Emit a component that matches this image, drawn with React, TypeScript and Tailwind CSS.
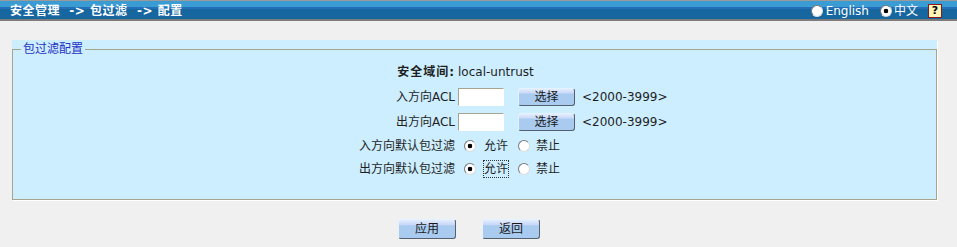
const font = "font-['DejaVu_Sans','Noto_Sans_CJK_SC',sans-serif]"

const Radio = ({ checked }: { checked?: boolean }) => (
    <span
        className={`inline-block h-[12px] w-[12px] rounded-full border border-[#7a7a7a] border-b-[#dcdcdc] border-r-[#dcdcdc] ${
            checked ? "bg-[radial-gradient(circle,#000000_2px,#ffffff_2.6px)]" : "bg-white"
        }`}
    />
)

const Btn = ({ label, w, h }: { label: string; w: string; h: string }) => (
    <button
        className={`${w} ${h} flex items-center justify-center rounded-[3px] border border-[#e6f2ff] border-b-[#55606e] border-r-[#55606e] bg-[linear-gradient(to_bottom,#e2eefd_0%,#cbd8f8_25%,#a9cbf0_32%,#a9cbf0_100%)] text-[12px] text-[#1a1a1a]`}
    >
        {label}
    </button>
)

const Row = ({ label, h, children }: { label: React.ReactNode; h: string; children: React.ReactNode }) => (
    <div className={`flex items-center ${h}`}>
        <div className="w-[442px] text-right">{label}</div>
        <div className="flex items-center pl-[3px]">{children}</div>
    </div>
)

export default function App() {
    return (
        <div className={`min-h-[247px] w-[957px] bg-[#f0f0f0] text-[12px] leading-[16px] text-[#1e1e1e] ${font}`}>
            {/* title bar */}
            <div className="flex h-[21px] items-center justify-between bg-[linear-gradient(to_bottom,#9a9a9a_0px,#9a9a9a_1px,#3b9bd3_1px,#3b9bd3_7px,#2470b8_7px,#2470b8_9px,#16679f_9px,#16679f_19px,#7c7c7c_19px,#7c7c7c_21px)] pl-[10px] pr-[15px]">
                <span className="whitespace-pre font-bold tracking-[0.5px] text-white">安全管理  -&gt; 包过滤  -&gt; 配置</span>
                <div className="flex items-center text-white">
                    <Radio />
                    <span className="ml-[3px]">English</span>
                    <span className="ml-[11px] flex"><Radio checked /></span>
                    <span className="ml-[2px]">中文</span>
                    <span className="ml-[10px] flex h-[14px] w-[14px] items-center justify-center border border-[#8a1a1a] bg-[#fff6b8] text-[11px] font-bold leading-none text-black">?</span>
                </div>
            </div>

            {/* form panel */}
            <div className="ml-[12px] mt-[19px] w-[925px] bg-[#cdeeff] pt-[1px] shadow-[1px_1px_0_#ffffff]">
                <fieldset className="h-[159px] border border-[#a6a48c]">
                    <legend className="ml-[8px] px-[2px] text-[#2631c4]">包过滤配置</legend>
                    <div className="flex flex-col pt-[2px]">
                        <Row h="h-[25px]" label={<span className="font-bold tracking-[1px]">安全域间:</span>}>
                            local-untrust
                        </Row>
                        <Row h="h-[25px]" label="入方向ACL">
                            <span className="h-[18px] w-[46px] border border-[#a6a48c] border-b-white border-r-white bg-white" />
                            <span className="ml-[14px]"><Btn label="选择" w="w-[57px]" h="h-[18px]" /></span>
                            <span className="ml-[7px]">&lt;2000-3999&gt;</span>
                        </Row>
                        <Row h="h-[25px]" label="出方向ACL">
                            <span className="h-[18px] w-[46px] border border-[#a6a48c] border-b-white border-r-white bg-white" />
                            <span className="ml-[14px]"><Btn label="选择" w="w-[57px]" h="h-[18px]" /></span>
                            <span className="ml-[7px]">&lt;2000-3999&gt;</span>
                        </Row>
                        <Row h="h-[23px]" label="入方向默认包过滤">
                            <span className="ml-[6px] flex"><Radio checked /></span>
                            <span className="ml-[8px]">允许</span>
                            <span className="ml-[10px] flex"><Radio /></span>
                            <span className="ml-[6px]">禁止</span>
                        </Row>
                        <Row h="h-[24px]" label="出方向默认包过滤">
                            <span className="ml-[6px] flex"><Radio checked /></span>
                            <span className="ml-[7px] border border-dotted border-[#333]">允许</span>
                            <span className="ml-[9px] flex"><Radio /></span>
                            <span className="ml-[6px]">禁止</span>
                        </Row>
                    </div>
                </fieldset>
            </div>

            {/* actions */}
            <div className="mt-[19px] flex w-[938px] justify-center gap-[26px]">
                <Btn label="应用" w="w-[58px]" h="h-[20px]" />
                <Btn label="返回" w="w-[58px]" h="h-[20px]" />
            </div>
        </div>
    )
}
